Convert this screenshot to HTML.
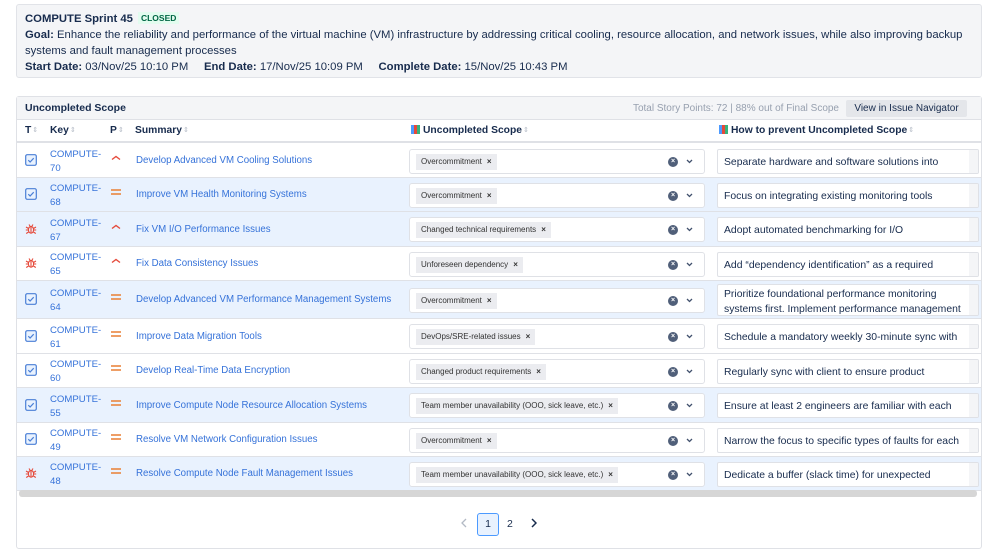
<!DOCTYPE html>
<html><head><meta charset="utf-8"><style>
*{box-sizing:border-box;margin:0;padding:0}
body{width:999px;height:553px;background:#fff;font-family:"Liberation Sans",sans-serif;color:#172b4d;position:relative;overflow:hidden;font-size:12px}
.top{position:absolute;left:16px;top:4px;width:966px;height:74px;background:#f4f5f7;border:1px solid #e1e3e8;border-radius:3px;padding:6px 8px;font-size:11.3px;line-height:16px}
.top b{font-weight:bold}
.closed{display:inline-block;background:#e3fcef;color:#006644;font-size:8.5px;font-weight:bold;padding:0 3px;margin-left:5px;line-height:12px;vertical-align:1px}
.card{position:absolute;left:16px;top:96px;width:966px;height:453px;border:1px solid #dfe1e6;border-radius:3px}
.hd{position:absolute;left:0;top:0;width:964px;height:23px;background:#f4f5f7;border-bottom:1px solid #dfe1e6}
.hd .t{position:absolute;left:8px;top:5px;font-weight:bold;font-size:10.5px}
.hd .pts{position:absolute;right:142px;top:6px;color:#97a0af;font-size:10px}
.btn{position:absolute;right:14px;top:3px;height:17px;width:121px;background:#e4e6ea;border-radius:2px;font-size:10px;line-height:17px;text-align:center;color:#172b4d}
.ch{position:absolute;top:23px;left:0;width:964px;height:23px;border-bottom:2px solid #dfe1e6;font-weight:bold;font-size:10.3px}
.ch>span{position:absolute;top:5px;white-space:nowrap}
.s{color:#b3bac5;font-size:7px;font-weight:normal;margin-left:1px;vertical-align:1px}
.bar{display:inline-block;width:9px;height:9px;margin-right:3px;vertical-align:-1px;background:linear-gradient(90deg,#4c9aff 0 33%,#e5493a 33% 66%,#36b37e 66%)}
.row{position:absolute;left:0;width:964px;border-bottom:1px solid #dfe1e6}
.blue{background:#e9f2fe}
.ic{position:absolute;left:8px;width:12px;height:12px}
.key{position:absolute;left:33px;color:#3572d9;font-size:9.6px;line-height:14px}
.pr{position:absolute;left:93px;width:12px;height:10px}
.sum{position:absolute;left:119px;color:#3572d9;font-size:9.7px;white-space:nowrap}
.sel{position:absolute;left:392px;width:296px;height:25px;background:#fff;border:1px solid #dfe1e6;border-radius:3px}
.tag{position:absolute;left:6px;top:4px;height:16px;background:#ebecf0;font-size:8px;line-height:16px;padding:0 5px;color:#333;white-space:nowrap}
.tag i{font-style:normal;font-weight:bold;margin-left:5px}
.clr{position:absolute;right:26px;top:7px;width:10px;height:10px;border-radius:50%;background:#505f79;color:#fff;font-size:7px;line-height:10px;text-align:center;font-weight:bold}
.dd{position:absolute;right:11px;top:9px;width:7px;height:5px}
.ta{position:absolute;left:700px;width:262px;height:25px;background:#fff;border:1px solid #dfe1e6;border-radius:2px;padding:5px 14px 5px 6px;font-size:10.4px;line-height:15px;overflow:hidden;white-space:nowrap}
.ta:after{content:"";position:absolute;right:0;top:0;width:9px;height:100%;background:#f4f5f7}
.scr{position:absolute;left:2px;top:393px;width:958px;height:7px;background:#d6d6d6;border-radius:3px}
.pg{position:absolute;font-size:10.5px}
</style></head><body>
<div class="top">
<div><b>COMPUTE Sprint 45</b><span class="closed">CLOSED</span></div>
<div><b>Goal:</b> Enhance the reliability and performance of the virtual machine (VM) infrastructure by addressing critical cooling, resource allocation, and network issues, while also improving backup systems and fault management processes</div>
<div><b>Start Date:</b> 03/Nov/25 10:10 PM &nbsp;&nbsp;&nbsp; <b>End Date:</b> 17/Nov/25 10:09 PM &nbsp;&nbsp;&nbsp; <b>Complete Date:</b> 15/Nov/25 10:43 PM</div>
</div>
<div class="card">
<div class="hd"><span class="t">Uncompleted Scope</span><span class="pts">Total Story Points: 72 | 88% out of Final Scope</span><span class="btn">View in Issue Navigator</span></div>
<div class="ch"><span style="left:8px">T<span class="s">⇕</span></span><span style="left:33px">Key<span class="s">⇕</span></span><span style="left:93px">P<span class="s">⇕</span></span><span style="left:118px">Summary<span class="s">⇕</span></span><span style="left:394px"><i class="bar"></i>Uncompleted Scope<span class="s">⇕</span></span><span style="left:702px"><i class="bar"></i>How to prevent Uncompleted Scope<span class="s">⇕</span></span></div>
<div id="rows"></div>
<div class="scr"></div>
<svg class="pg" style="left:444px;top:421px" width="6" height="10" viewBox="0 0 6 10"><path d="M5 1L1 5l4 4" fill="none" stroke="#b3bac5" stroke-width="1.3"/></svg>
<div class="pg" style="left:460px;top:416px;width:22px;height:23px;border:1px solid #4c9aff;background:#e9f2fe;border-radius:3px;text-align:center;line-height:21px">1</div>
<div class="pg" style="left:490px;top:421px">2</div>
<svg class="pg" style="left:514px;top:421px" width="6" height="10" viewBox="0 0 6 10"><path d="M1 1l4 4-4 4" fill="none" stroke="#172b4d" stroke-width="1.5"/></svg>
</div>
<script>
var story='<svg class="ic" viewBox="0 0 12 12"><rect x="0.7" y="0.7" width="10.6" height="10.6" rx="1.5" fill="#e9f2fe" stroke="#4a7fd6" stroke-width="1.2"/><path d="M3.3 6.2l1.8 1.8 3.6-3.8" fill="none" stroke="#4a7fd6" stroke-width="1.2"/></svg>';
var bug='<svg class="ic" viewBox="0 0 12 12" fill="none" stroke="#e5493a" stroke-width="1.1"><ellipse cx="6" cy="6.8" rx="2.6" ry="3.4"/><path d="M1 4l2.5 1.5M11 4l-2.5 1.5M0.8 7h2.6M11.2 7H8.6M1.2 10.5l2.4-1.5M10.8 10.5l-2.4-1.5M6 3.5v6.5M4 1.5l1 1.5M8 1.5L7 3"/></svg>';
var up='<path d="M2 6.5l4-3 4 3" fill="none" stroke="#e5493a" stroke-width="1.4"/>';
var eq='<path d="M1 3h10M1 7h10" stroke="#e97f33" stroke-width="1.6"/>';
var R=[["70",1,"^","Develop Advanced VM Cooling Solutions","Overcommitment","Separate hardware and software solutions into",0,34],
["68",1,"=","Improve VM Health Monitoring Systems","Overcommitment","Focus on integrating existing monitoring tools",1,34],
["67",0,"^","Fix VM I/O Performance Issues","Changed technical requirements","Adopt automated benchmarking for I/O",1,35],
["65",0,"^","Fix Data Consistency Issues","Unforeseen dependency","Add “dependency identification” as a required",0,34],
["64",1,"=","Develop Advanced VM Performance Management Systems","Overcommitment","Prioritize foundational performance monitoring<br>systems first. Implement performance management",1,38],
["61",1,"=","Improve Data Migration Tools","DevOps/SRE-related issues","Schedule a mandatory weekly 30-minute sync with",0,35],
["60",1,"=","Develop Real-Time Data Encryption","Changed product requirements","Regularly sync with client to ensure product",0,34],
["55",1,"=","Improve Compute Node Resource Allocation Systems","Team member unavailability (OOO, sick leave, etc.)","Ensure at least 2 engineers are familiar with each",1,35],
["49",1,"=","Resolve VM Network Configuration Issues","Overcommitment","Narrow the focus to specific types of faults for each",0,34],
["48",0,"=","Resolve Compute Node Fault Management Issues","Team member unavailability (OOO, sick leave, etc.)","Dedicate a buffer (slack time) for unexpected",1,34]];
var y=47,h='';
R.forEach(function(r){var H=r[7],c=H/2;
var pri='<svg class="pr" style="top:'+(c-8)+'px" viewBox="0 0 12 10">'+(r[2]=="^"?up:eq)+'</svg>';
var tah=r[0]=="64"?32:25;
h+='<div class="row'+(r[6]?' blue':'')+'" style="top:'+y+'px;height:'+H+'px">'+
(r[1]?story:bug).replace('class="ic"','class="ic" style="top:'+(c-7)+'px"')+
'<div class="key" style="top:'+(c-13)+'px">COMPUTE-<br>'+r[0]+'</div>'+pri+
'<div class="sum" style="top:'+(c-6)+'px">'+r[3]+'</div>'+
'<div class="sel" style="top:'+(c-12.5)+'px"><span class="tag">'+r[4]+'<i>×</i></span><span class="clr">×</span><svg class="dd" viewBox="0 0 7 5"><path d="M1 1l2.5 2.5L6 1" fill="none" stroke="#42526e" stroke-width="1.3"/></svg></div>'+
'<div class="ta" style="top:'+(c-tah/2)+'px;height:'+tah+'px;'+(r[0]=="64"?'padding-top:2px;':'')+'">'+r[5]+'</div></div>';
y+=H;});
document.getElementById('rows').innerHTML=h;
</script>
</body></html>
